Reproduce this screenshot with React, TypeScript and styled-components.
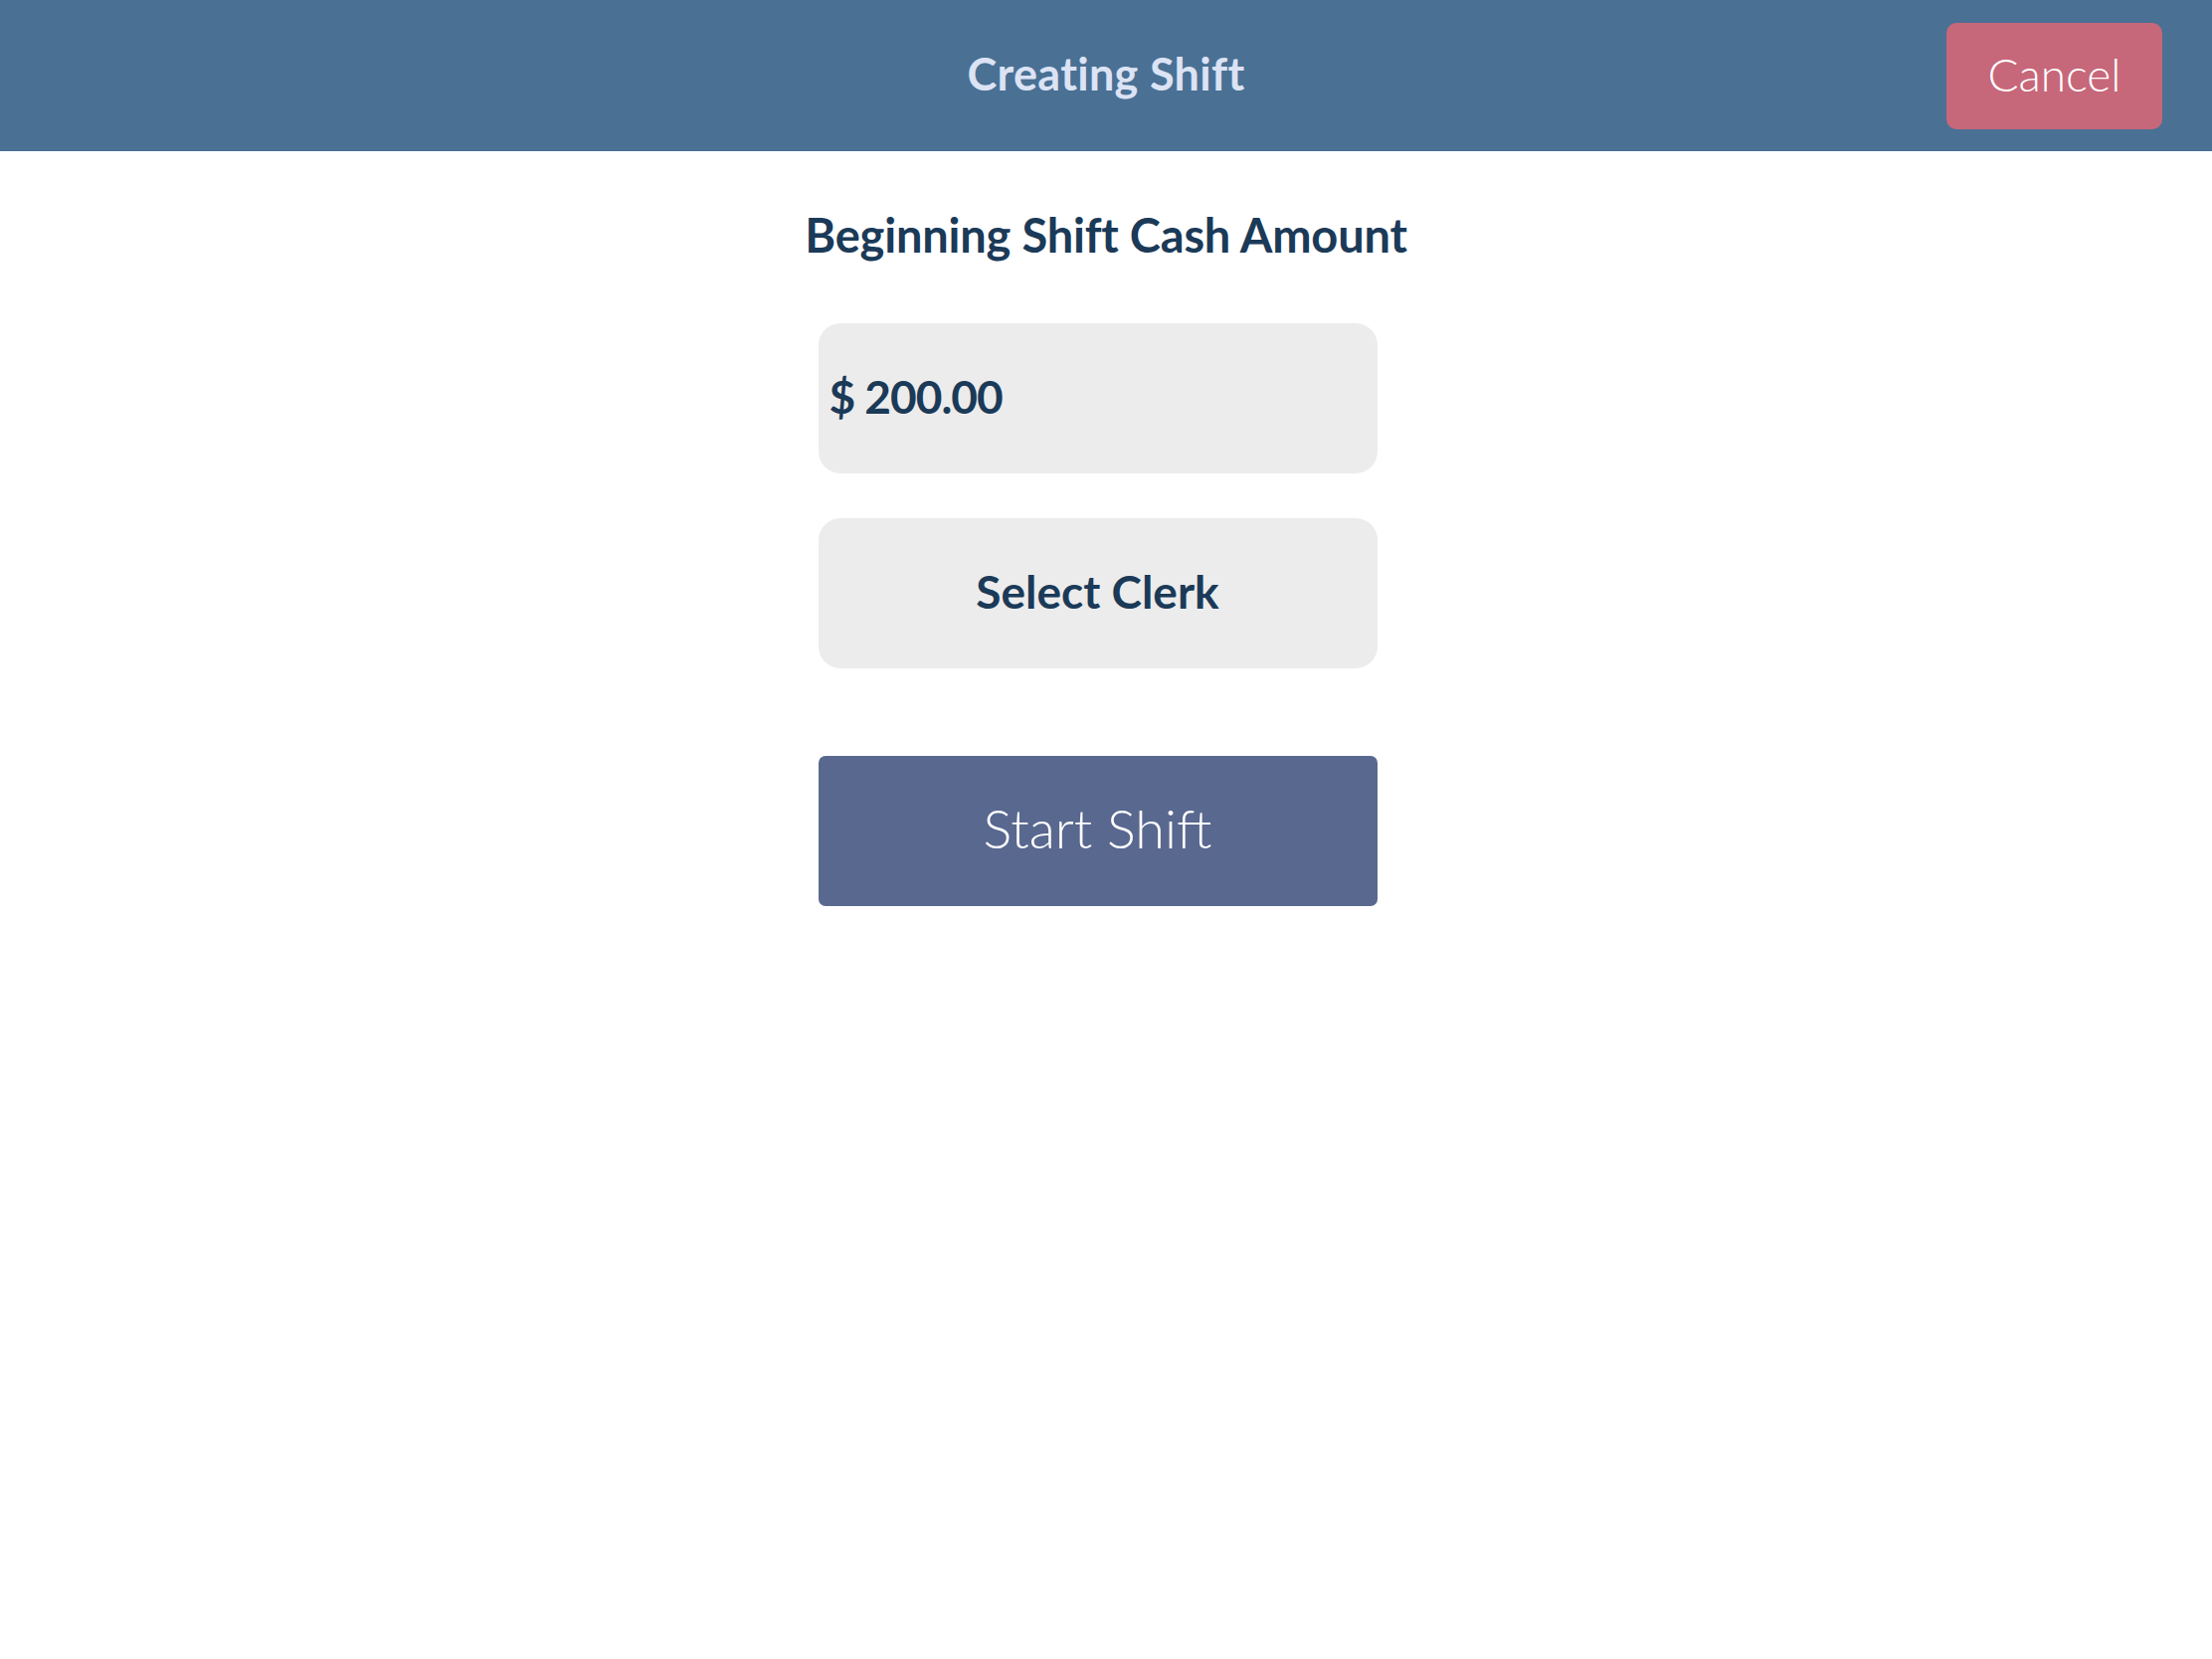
import styled, { createGlobalStyle } from 'styled-components'

const GlobalStyle = createGlobalStyle`
  html, body {
    margin: 0;
    padding: 0;
    background: #ffffff;
  }
  body {
    font-family: Lato, 'Noto Sans', sans-serif;
  }
`

const App = () => {
  return (
    <Page>
      <GlobalStyle />
      <Header>
        <span />
        <Title>Creating Shift</Title>
        <CancelButton>Cancel</CancelButton>
      </Header>
      <Content>
        <Heading>Beginning Shift Cash Amount</Heading>
        <Form>
          <Field>
            <Amount>$ 200.00</Amount>
          </Field>
          <Field center>
            <FieldLabel>Select Clerk</FieldLabel>
          </Field>
          <StartButton>Start Shift</StartButton>
        </Form>
      </Content>
    </Page>
  )
}

export default App

const Page = styled.div`
  width: 2224px;
  min-height: 1668px;
  background: #ffffff;
`

const Header = styled.header`
  height: 152px;
  background-color: #4a7094;
  display: grid;
  grid-template-columns: 1fr auto 1fr;
  align-items: center;
  padding-right: 50px;
  padding-left: 50px;
  box-sizing: border-box;
`

const Title = styled.h1`
  margin: 0 0 3px;
  font-family: Lato, sans-serif;
  font-weight: 700;
  font-size: 45px;
  line-height: 1;
  color: #dce3f4;
  letter-spacing: 0.3px;
`

const CancelButton = styled.button`
  justify-self: end;
  width: 217px;
  height: 107px;
  border: none;
  border-radius: 10px;
  background-color: #c6687a;
  color: #ffffff;
  font-family: Lato, sans-serif;
  font-weight: 300;
  font-size: 46px;
  padding: 0 0 4px;
  cursor: pointer;
`

const Content = styled.main`
  display: flex;
  flex-direction: column;
  align-items: center;
  padding-top: 61px;
`

const Heading = styled.h2`
  margin: 0;
  font-family: Lato, sans-serif;
  font-weight: 700;
  font-size: 47px;
  line-height: 1;
  color: #1b3a58;
  letter-spacing: -0.2px;
`

const Form = styled.div`
  display: flex;
  flex-direction: column;
  width: 562px;
  margin-top: 65px;
  margin-right: 17px;
`

const Field = styled.div<{ center?: boolean }>`
  height: 151px;
  border-radius: 22px;
  background-color: #ececec;
  display: flex;
  align-items: center;
  justify-content: ${props => (props.center ? 'center' : 'flex-start')};
  padding-left: ${props => (props.center ? '0' : '11px')};
  padding-bottom: 5px;
  margin-bottom: 45px;
  box-sizing: border-box;
`

const Amount = styled.span`
  font-family: Lato, sans-serif;
  font-weight: 700;
  font-size: 46px;
  letter-spacing: -1px;
  color: #1b3a58;
`

const FieldLabel = styled.span`
  font-family: Lato, sans-serif;
  font-weight: 700;
  font-size: 46px;
  color: #1b3a58;
`

const StartButton = styled.button`
  margin-top: 43px;
  height: 151px;
  border: none;
  border-radius: 7px;
  background-color: #59688f;
  color: #ffffff;
  font-family: Lato, sans-serif;
  font-weight: 300;
  font-size: 54px;
  padding: 0 0 6px;
  cursor: pointer;
`
